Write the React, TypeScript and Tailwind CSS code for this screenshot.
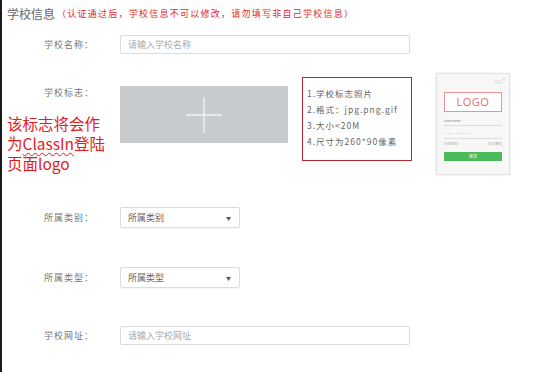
import React from 'react'

const cjk = { fontFamily: '"Noto Sans CJK SC", "Noto Sans", sans-serif' }

function Label({ children }: { children: React.ReactNode }) {
  return <div className="w-[76px] shrink-0 text-[9px] tracking-[1px] text-[#777]">{children}</div>
}

function Select({ text, mt }: { text: string; mt: string }) {
  return (
    <div className={`flex items-center pl-[42px] ${mt}`}>
      <Label>{text}：</Label>
      <div className="flex h-[21px] w-[120px] items-center justify-between rounded-[2px] border border-[#dcdcdc] bg-white pl-[7px] pr-[8px] text-[9px] text-[#666] shadow-[0_1px_1px_rgba(0,0,0,0.04)]">
        <span>{text}</span>
        <span className="text-[5px] text-[#555]">▼</span>
      </div>
    </div>
  )
}

export default function App() {
  return (
    <div className="relative h-[372px] w-[550px] overflow-hidden border-l-2 border-[#1a1a1a] bg-white" style={cjk}>
      {/* header */}
      <div className="flex h-[28px] items-center pl-[5px]">
        <span className="text-[12px] text-[#666]">学校信息</span>
        <span className="ml-[2px] text-[9px] tracking-[1.25px] text-[#e5262b]">（认证通过后，学校信息不可以修改，请勿填写非自己学校信息）</span>
      </div>

      {/* 学校名称 */}
      <div className="mt-[7px] flex items-center pl-[42px]">
        <Label>学校名称：</Label>
        <div className="flex h-[19px] w-[290px] items-center rounded-[2px] border border-[#dcdcdc] pl-[7px] text-[9px] text-[#aaa]">
          请输入学校名称
        </div>
      </div>

      {/* 学校标志 */}
      <div className="mt-[19px] flex items-start pl-[42px]">
        <div className="pt-[13px]">
          <Label>学校标志：</Label>
        </div>
        <div className="mt-[13px] flex h-[57px] w-[168px] items-center justify-center bg-[#c8cbce]">
          <svg width="38" height="38" viewBox="0 0 38 38">
            <path d="M19 1v36M1 19h36" stroke="#f4f4f4" strokeWidth="1.3" />
          </svg>
        </div>
        <div className="ml-[14px] mt-[4px] flex h-[84px] w-[110px] flex-col gap-[3px] border border-[#b3262e] pl-[4px] pt-[9px] text-[8.5px] leading-[13px] tracking-[1px] text-[#666]">
          <span>1.学校标志照片</span>
          <span>2.格式：jpg.png.gif</span>
          <span>3.大小&lt;20M</span>
          <span>4.尺寸为260*90像素</span>
        </div>

        {/* login preview */}
        <div className="relative ml-[24px] flex h-[102px] w-[74px] flex-col border border-[#e0e0e0] bg-[#f7f7f7] px-[7px] shadow-[0_0_2px_rgba(0,0,0,0.08)]">
          <span className="absolute right-[3px] top-[1px] text-[5px] text-[#bbb]">×</span>
          <div className="mt-[5px] self-end text-[4px] text-[#ccc]">中文</div>
          <div className="mt-[7px] flex h-[20px] items-center justify-center border border-[#e89494] bg-white text-[11px] tracking-[0.5px] text-[#e46c6c]" style={{ fontFamily: '"Open Sans", sans-serif' }}>
            LOGO
          </div>
          <div className="mt-[6px] text-[3.5px] text-[#888]">username</div>
          <div className="mt-[2px] h-px bg-[#ddd]" />
          <div className="mt-[5px] text-[3.5px] text-[#888]">••••••••</div>
          <div className="mt-[1px] h-px bg-[#ddd]" />
          <div className="mt-[2px] flex justify-between text-[3.5px] text-[#aaa]">
            <span>记住密码</span>
            <span>忘记密码</span>
          </div>
          <div className="mt-[6px] flex h-[9px] items-center justify-center bg-[#4cb95a] text-[4px] text-white">登录</div>
        </div>
      </div>

      <Select text="所属类别" mt="mt-[32px]" />
      <Select text="所属类型" mt="mt-[39px]" />

      {/* 学校网址 */}
      <div className="mt-[38px] flex items-center pl-[42px]">
        <Label>学校网址：</Label>
        <div className="flex h-[19px] w-[290px] items-center rounded-[2px] border border-[#dcdcdc] pl-[7px] text-[9px] text-[#aaa]">
          请输入学校网址
        </div>
      </div>

      {/* annotation */}
      <div className="absolute left-[5px] top-[113px] text-[15.5px] leading-[20px] text-[#e41b1b]">
        <div className="h-[20px]">该标志将会作</div>
        <div className="h-[20px]">
          为<span className="underline decoration-[#e41b1b] decoration-wavy decoration-1 underline-offset-2">ClassIn</span>登陆
        </div>
        <div className="h-[20px]">页面logo</div>
      </div>
    </div>
  )
}
